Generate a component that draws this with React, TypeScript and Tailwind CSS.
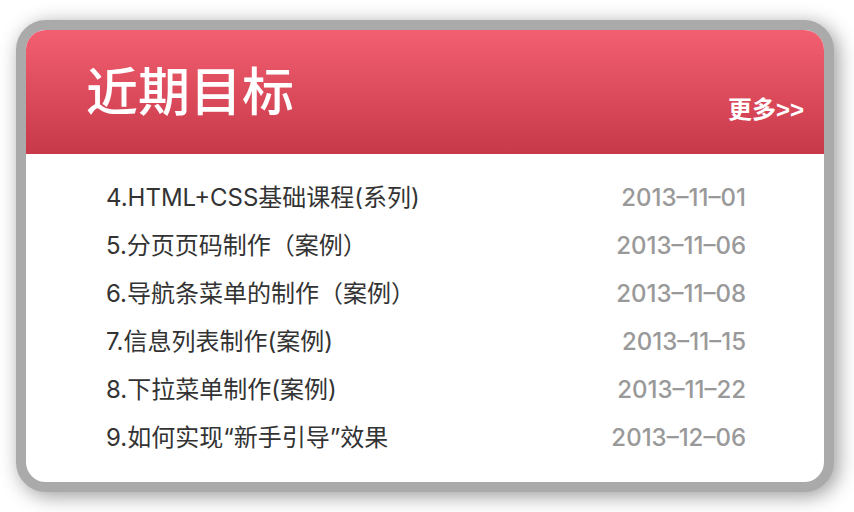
const goals = [
  { title: "4.HTML+CSS基础课程(系列)", date: "2013–11–01" },
  { title: "5.分页页码制作（案例）", date: "2013–11–06" },
  { title: "6.导航条菜单的制作（案例）", date: "2013–11–08" },
  { title: "7.信息列表制作(案例)", date: "2013–11–15" },
  { title: "8.下拉菜单制作(案例)", date: "2013–11–22" },
  { title: "9.如何实现“新手引导”效果", date: "2013–12–06" },
];

export default function App() {
  return (
    <main className="min-h-screen bg-white pt-5 pr-5 pb-5 pl-4 font-['Inter','Noto_Sans_CJK_SC',sans-serif]">
      <section className="overflow-hidden rounded-[30px] border-10 border-[#aaa] bg-white shadow-[4px_4px_20px_rgba(0,0,0,0.4)]">
        <header className="flex h-31 items-end justify-between bg-linear-to-b from-[#f25f71] to-[#c73848] pr-5 pl-15 text-white">
          <h1 className="pb-6 text-[52px] leading-[74px] font-medium">近期目标</h1>
          <a href="#more" className="pb-6 font-['Liberation_Sans','Noto_Sans_CJK_SC',sans-serif] text-2xl leading-10 font-semibold">更多&gt;&gt;</a>
        </header>
        <ul className="pt-5 pr-[78px] pb-5 pl-20 text-2xl leading-12">
          {goals.map((goal) => (
            <li key={goal.title} className="flex justify-between">
              <a href="#goal" className="text-[#333]">{goal.title}</a>
              <time className="font-medium text-[#999]">{goal.date}</time>
            </li>
          ))}
        </ul>
      </section>
    </main>
  );
}
